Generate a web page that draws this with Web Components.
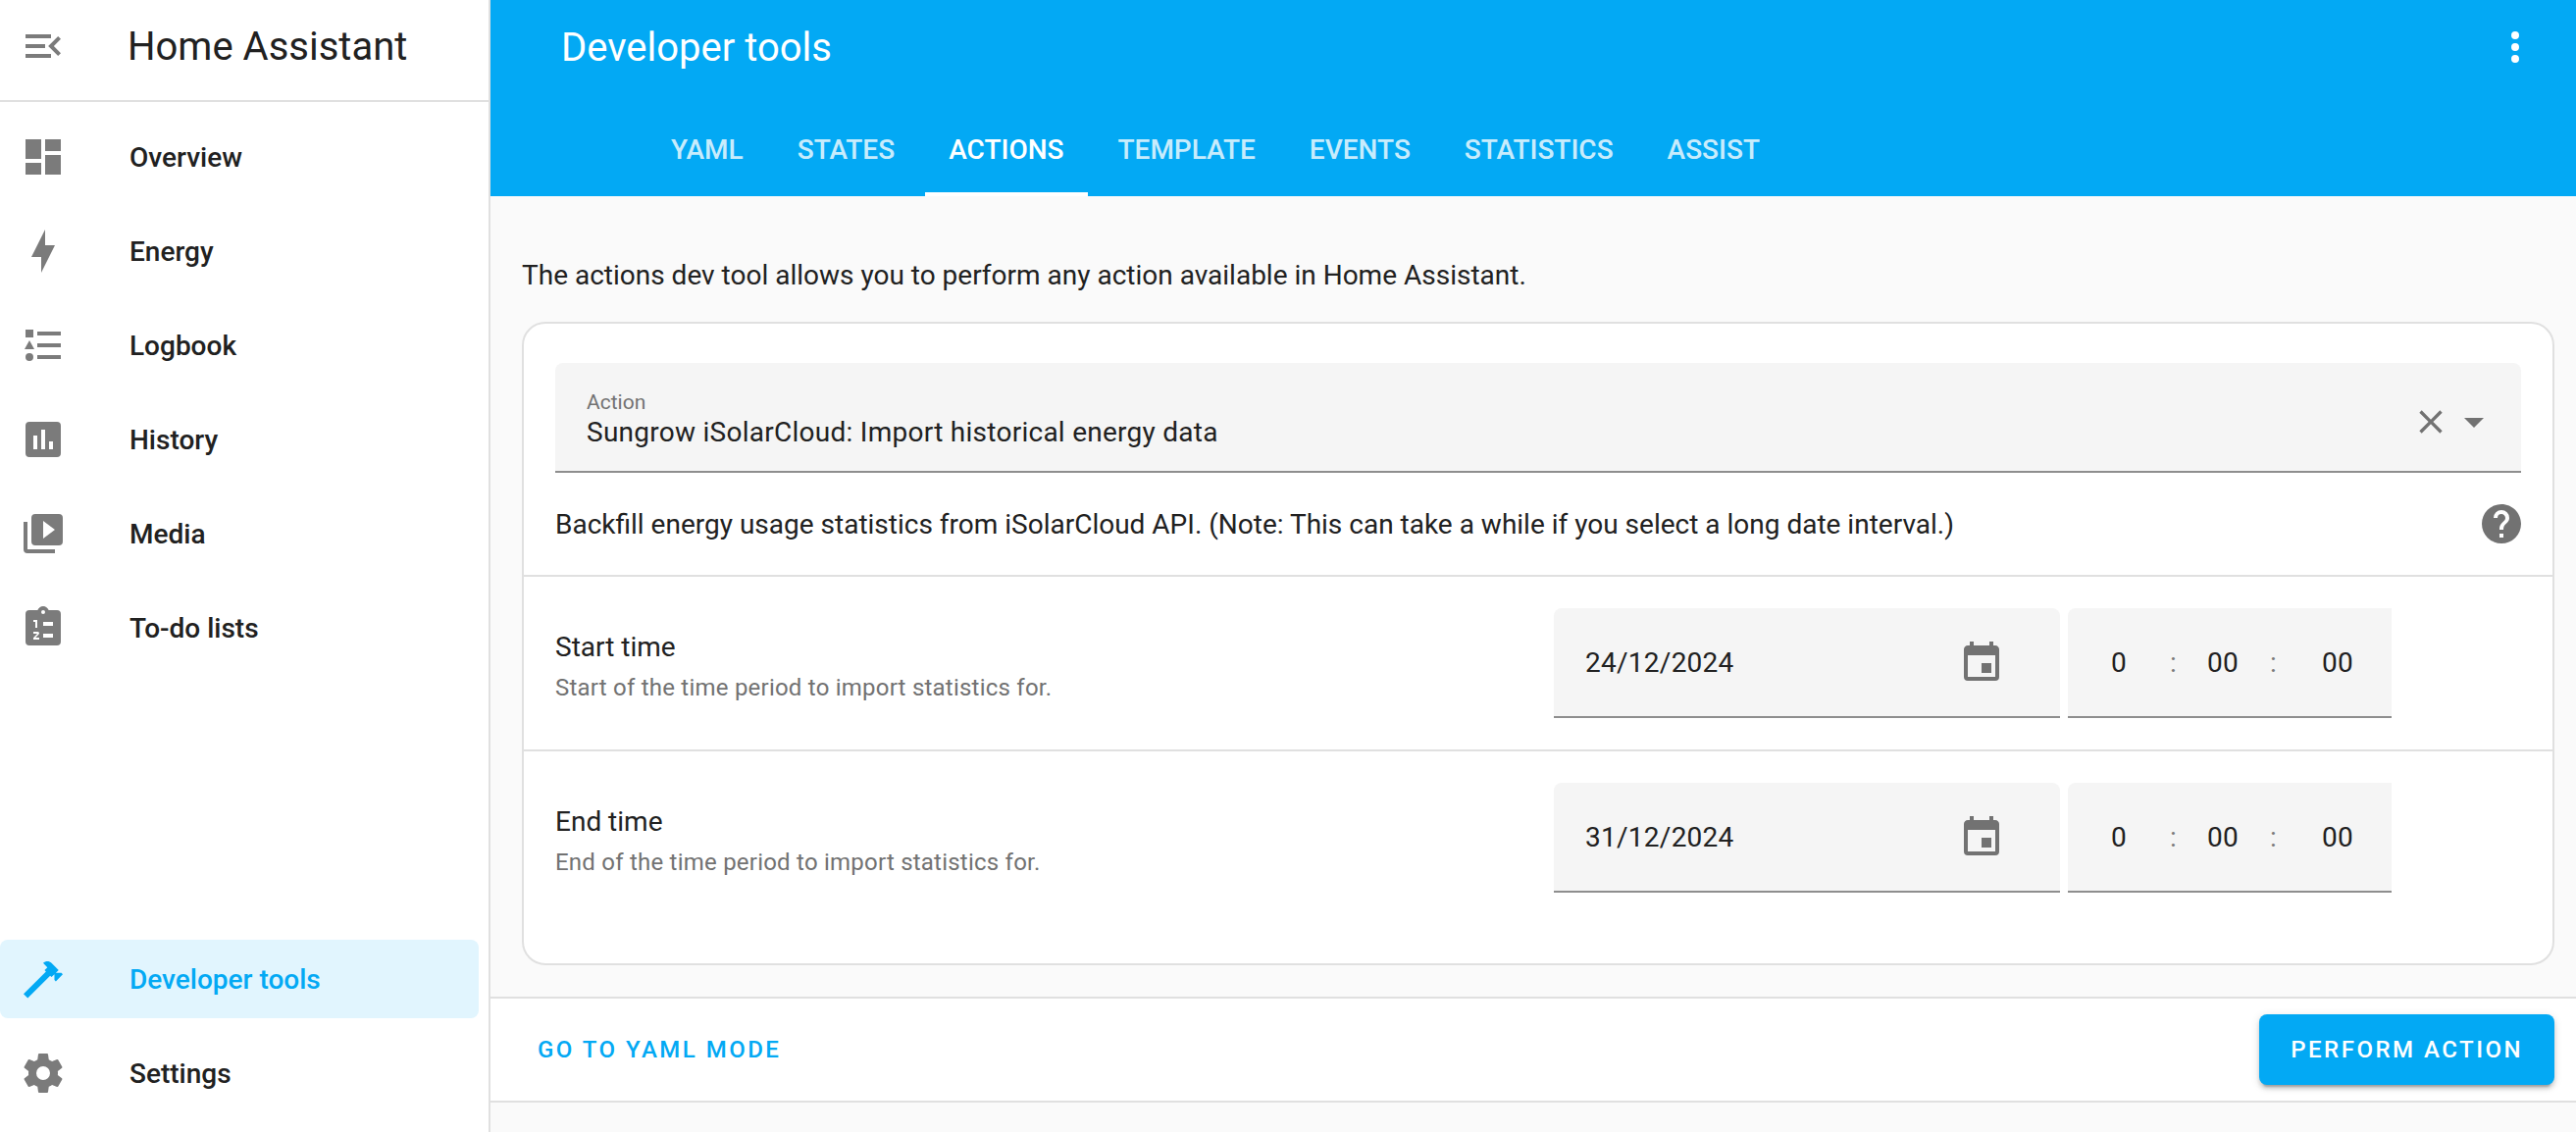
<!DOCTYPE html>
<html lang="en">
<head>
<meta charset="utf-8">
<meta name="viewport" content="width=device-width, initial-scale=1">
<title>Developer tools – Home Assistant</title>
<style>
  :root {
    --primary: #03a9f4;
    --text: #212121;
    --text-secondary: #727272;
    --divider: #e0e0e0;
    --page: #fafafa;
    --field: #f5f5f5;
    --field-line: #8e8e8e;
    --body-spacing: .009375em;
  }
  body {
    margin: 0;
    background: var(--page);
    color: var(--text);
    font: 400 28px/40px Roboto, "Noto Sans", sans-serif;
  }
</style>
</head>
<body>
<ha-app></ha-app>
<script>
  const ICONS = {
    menuOpen: 'M21,15.61L19.59,17L14.58,12L19.59,7L21,8.39L17.44,12L21,15.61M3,6H16V8H3V6M3,13V11H13V13H3M3,18V16H16V18H3Z',
    dashboard: 'M13,3V9H21V3M13,21H21V11H13M3,21H11V15H3M3,13H11V3H3V13Z',
    bolt: 'M11 15H6L13 1V9H18L11 23V15Z',
    logbook: 'M5,9.5L7.5,14H2.5L5,9.5M3,4H7V8H3V4M5,20A2,2 0 0,0 7,18A2,2 0 0,0 5,16A2,2 0 0,0 3,18A2,2 0 0,0 5,20M9,5V7H21V5H9M9,19H21V17H9V19M9,11V13H21V11H9Z',
    chart: 'M19,3H5A2,2 0 0,0 3,5V19A2,2 0 0,0 5,21H19A2,2 0 0,0 21,19V5A2,2 0 0,0 19,3M9,17H7V10H9V17M13,17H11V7H13V17M17,17H15V13H17V17Z',
    media: 'M4,6H2V20A2,2 0 0,0 4,22H18V20H4V6M20,2H8A2,2 0 0,0 6,4V16A2,2 0 0,0 8,18H20A2,2 0 0,0 22,16V4A2,2 0 0,0 20,2M12,14.5V5.5L18,10L12,14.5Z',
    todo: 'M19,3H14.82C14.4,1.84 13.3,1 12,1C10.7,1 9.6,1.84 9.18,3H5A2,2 0 0,0 3,5V19A2,2 0 0,0 5,21H19A2,2 0 0,0 21,19V5A2,2 0 0,0 19,3M12,3A1,1 0 0,1 13,4A1,1 0 0,1 12,5A1,1 0 0,1 11,4A1,1 0 0,1 12,3M7,8H9V12H8V9H7V8M12,9H17V11H12V9M7,14H9.25A0.75,0.75 0 0,1 10,14.75C10,14.95 9.92,15.14 9.79,15.27L8.12,17H10V18H7V17.08L9,15H7V14M12,15H17V17H12V15Z',
    hammer: 'M2,19.63L13.43,8.2L12.72,7.5L14.14,6.07L12,3.89C13.2,2.7 15.09,2.7 16.27,3.89L19.87,7.5L18.45,8.91H21.29L22,9.62L18.45,13.21L17.74,12.5V9.62L16.27,11.04L15.56,10.33L4.13,21.76L2,19.63Z',
    cog: 'M12,15.5A3.5,3.5 0 0,1 8.5,12A3.5,3.5 0 0,1 12,8.5A3.5,3.5 0 0,1 15.5,12A3.5,3.5 0 0,1 12,15.5M19.43,12.97C19.47,12.65 19.5,12.33 19.5,12C19.5,11.67 19.47,11.34 19.43,11L21.54,9.37C21.73,9.22 21.78,8.95 21.66,8.73L19.66,5.27C19.54,5.05 19.27,4.96 19.05,5.05L16.56,6.05C16.04,5.66 15.5,5.32 14.87,5.07L14.5,2.42C14.46,2.18 14.25,2 14,2H10C9.75,2 9.54,2.18 9.5,2.42L9.13,5.07C8.5,5.32 7.96,5.66 7.44,6.05L4.95,5.05C4.73,4.96 4.46,5.05 4.34,5.27L2.34,8.73C2.21,8.95 2.27,9.22 2.46,9.37L4.57,11C4.53,11.34 4.5,11.67 4.5,12C4.5,12.33 4.53,12.65 4.57,12.97L2.46,14.63C2.27,14.78 2.21,15.05 2.34,15.27L4.34,18.73C4.46,18.95 4.73,19.03 4.95,18.95L7.44,17.94C7.96,18.34 8.5,18.68 9.13,18.93L9.5,21.58C9.54,21.82 9.75,22 10,22H14C14.25,22 14.46,21.82 14.5,21.58L14.87,18.93C15.5,18.67 16.04,18.34 16.56,17.94L19.05,18.95C19.27,19.03 19.54,18.95 19.66,18.73L21.66,15.27C21.78,15.05 21.73,14.78 21.54,14.63L19.43,12.97Z',
    dots: 'M12,16A2,2 0 0,1 14,18A2,2 0 0,1 12,20A2,2 0 0,1 10,18A2,2 0 0,1 12,16M12,10A2,2 0 0,1 14,12A2,2 0 0,1 12,14A2,2 0 0,1 10,12A2,2 0 0,1 12,10M12,4A2,2 0 0,1 14,6A2,2 0 0,1 12,8A2,2 0 0,1 10,6A2,2 0 0,1 12,4Z',
    close: 'M19,6.41L17.59,5L12,10.59L6.41,5L5,6.41L10.59,12L5,17.59L6.41,19L12,13.41L17.59,19L19,17.59L13.41,12L19,6.41Z',
    down: 'M7,10L12,15L17,10H7Z',
    help: 'M15.07,11.25L14.17,12.17C13.45,12.89 13,13.5 13,15H11V14.5C11,13.39 11.45,12.39 12.17,11.67L13.41,10.41C13.78,10.05 14,9.55 14,9C14,7.89 13.1,7 12,7A2,2 0 0,0 10,9H8A4,4 0 0,1 12,5A4,4 0 0,1 16,9C16,9.88 15.64,10.67 15.07,11.25M13,19H11V17H13M12,2A10,10 0 0,0 2,12A10,10 0 0,0 12,22A10,10 0 0,0 22,12C22,6.47 17.5,2 12,2Z',
    calendar: 'M19,19H5V8H19M16,1V3H8V1H6V3H5C3.89,3 3,3.89 3,5V19A2,2 0 0,0 5,21H19A2,2 0 0,0 21,19V5C21,3.89 20.1,3 19,3H18V1M17,12H12V17H17V12Z'
  };

  const RESET = `
    *, *::before, *::after { box-sizing: border-box; }
    button, input { font: inherit; color: inherit; background: none; border: 0; padding: 0; margin: 0; outline: 0; border-radius: 0; }
    button { display: flex; align-items: center; cursor: pointer; }
    a { color: inherit; text-decoration: none; }
    h1, p { margin: 0; font: inherit; }
  `;

  class ShadowElement extends HTMLElement {
    connectedCallback() {
      if (this.shadowRoot) return;
      const t = document.createElement('template');
      t.innerHTML = `<style>${RESET}</style>` + this.render();
      this.attachShadow({ mode: 'open' }).append(t.content.cloneNode(true));
    }
    attr(name) { return this.getAttribute(name) || ''; }
  }

  class HaIcon extends ShadowElement {
    render() {
      return `<style>
        :host { display: block; flex: none; width: 48px; height: 48px; }
        svg { display: block; width: 100%; height: 100%; fill: currentColor; }
      </style>
      <svg viewBox="${this.attr('box') || '0 0 24 24'}" aria-hidden="true"><path fill-rule="evenodd" d="${ICONS[this.attr('name')]}"/></svg>`;
    }
  }

  class HaSidebarItem extends ShadowElement {
    render() {
      return `<style>
        :host { display: block; margin-right: 10px; }
        a { display: flex; align-items: center; gap: 64px; height: 80px; padding: 0 20px; border-radius: 8px; font-weight: 500; }
        span { padding-top: 2px; }
        ha-icon { color: #7b7b7b; }
        :host([selected]) a { background: #e1f5fe; color: var(--primary); }
        :host([selected]) ha-icon { color: inherit; }
      </style>
      <a href="#"><ha-icon name="${this.attr('icon')}"></ha-icon><span><slot></slot></span></a>`;
    }
  }

  class HaSidebar extends ShadowElement {
    render() {
      return `<style>
        :host { display: flex; flex-direction: column; background: #fff; border-right: 2px solid var(--divider); }
        header { display: flex; align-items: center; gap: 62px; height: 104px; padding: 0 20px 8px; border-bottom: 2px solid var(--divider); }
        button { color: #7b7b7b; }
        h1 { padding-top: 2px; font-size: 40px; }
        nav { flex: 1; display: flex; flex-direction: column; gap: 16px; padding: 16px 0 20px; }
        .spacer { flex: 1; }
      </style>
      <header>
        <button type="button" aria-label="Sidebar toggle"><ha-icon name="menuOpen"></ha-icon></button>
        <h1>Home Assistant</h1>
      </header>
      <nav>
        <ha-sidebar-item icon="dashboard">Overview</ha-sidebar-item>
        <ha-sidebar-item icon="bolt">Energy</ha-sidebar-item>
        <ha-sidebar-item icon="logbook">Logbook</ha-sidebar-item>
        <ha-sidebar-item icon="chart">History</ha-sidebar-item>
        <ha-sidebar-item icon="media">Media</ha-sidebar-item>
        <ha-sidebar-item icon="todo">To-do lists</ha-sidebar-item>
        <div class="spacer"></div>
        <ha-sidebar-item icon="hammer" selected>Developer tools</ha-sidebar-item>
        <ha-sidebar-item icon="cog">Settings</ha-sidebar-item>
      </nav>`;
    }
  }

  class HaTab extends ShadowElement {
    render() {
      return `<style>
        :host { display: flex; }
        button { padding: 2px 24px 0; font-weight: 500; text-transform: uppercase; color: rgba(255, 255, 255, .8); border: solid transparent; border-width: 4px 0; }
        :host([active]) button { color: #fff; border-bottom-color: #fff; }
      </style>
      <button type="button" role="tab" aria-selected="${this.hasAttribute('active')}"><slot></slot></button>`;
    }
  }

  class HaHeader extends ShadowElement {
    render() {
      return `<style>
        :host { display: block; background: var(--primary); color: #fff; }
        .bar { display: flex; align-items: center; justify-content: space-between; height: 104px; padding: 0 38px 8px 72px; }
        h1 { padding-top: 2px; font-size: 40px; }
        .tabs { display: flex; gap: 7px; height: 96px; padding-left: 160px; }
      </style>
      <div class="bar">
        <h1>Developer tools</h1>
        <button type="button" aria-label="Menu"><ha-icon name="dots"></ha-icon></button>
      </div>
      <div class="tabs" role="tablist">
        <ha-tab>YAML</ha-tab>
        <ha-tab>States</ha-tab>
        <ha-tab active>Actions</ha-tab>
        <ha-tab>Template</ha-tab>
        <ha-tab>Events</ha-tab>
        <ha-tab>Statistics</ha-tab>
        <ha-tab>Assist</ha-tab>
      </div>`;
    }
  }

  class HaActionPicker extends ShadowElement {
    render() {
      return `<style>
        :host { display: flex; align-items: center; height: 112px; padding: 10px 24px 0 32px; background: var(--field); border-bottom: 2px solid var(--field-line); border-radius: 8px 8px 0 0; color: var(--text); }
        .text { flex: 1; display: flex; flex-direction: column; }
        label { font-size: 21px; line-height: 22px; color: var(--text-secondary); }
        input { width: 100%; height: 40px; letter-spacing: var(--body-spacing); }
        button { color: var(--text-secondary); }
        .clear ha-icon { width: 40px; height: 40px; }
      </style>
      <div class="text">
        <label for="action">Action</label>
        <input id="action" type="text" role="combobox" aria-expanded="false" value="${this.attr('value')}">
      </div>
      <button class="clear" type="button" aria-label="Clear"><ha-icon name="close"></ha-icon></button>
      <button type="button" aria-label="Toggle"><ha-icon name="down"></ha-icon></button>`;
    }
  }

  class HaDateInput extends ShadowElement {
    render() {
      return `<style>
        :host { display: flex; align-items: center; height: 112px; padding: 2px 56px 0 32px; background: var(--field); border-bottom: 2px solid var(--field-line); border-radius: 8px 8px 0 0; }
        input { flex: 1; min-width: 0; height: 40px; letter-spacing: var(--body-spacing); }
        button { color: var(--text-secondary); }
      </style>
      <input type="text" aria-label="${this.attr('label')} date" value="${this.attr('value')}">
      <button type="button" aria-label="Open calendar"><ha-icon name="calendar"></ha-icon></button>`;
    }
  }

  class HaTimeInput extends ShadowElement {
    render() {
      const [h, m, s] = this.attr('value').split(':');
      const label = this.attr('label');
      return `<style>
        :host { display: grid; grid-template-columns: 104px 6px 96px 6px 118px; align-items: center; height: 112px; padding-top: 2px; background: var(--field); border-bottom: 2px solid var(--field-line); border-radius: 8px 0 0 0; }
        input { width: 100%; height: 40px; text-align: center; letter-spacing: var(--body-spacing); }
        span { text-align: center; color: #7b7b7b; }
        input:last-child { padding-left: 8px; }
      </style>
      <input type="text" inputmode="numeric" aria-label="${label} hours" value="${h}"><span>:</span>
      <input type="text" inputmode="numeric" aria-label="${label} minutes" value="${m}"><span>:</span>
      <input type="text" inputmode="numeric" aria-label="${label} seconds" value="${s}">`;
    }
  }

  class HaSettingsRow extends ShadowElement {
    render() {
      return `<style>
        :host { display: grid; grid-template-columns: 1018fr 986fr; align-items: center; padding: 32px; border-top: 2px solid var(--divider); }
        .text { padding-top: 10px; }
        .sub { font-size: 24px; line-height: 42px; letter-spacing: var(--body-spacing); color: var(--text-secondary); }
        .content { display: flex; gap: 8px; padding-right: 132px; }
        ha-date-input { flex: 1; }
      </style>
      <div class="text"><p><slot></slot></p><p class="sub"><slot name="description"></slot></p></div>
      <div class="content">
        <ha-date-input label="${this.attr('label')}" value="${this.attr('date')}"></ha-date-input>
        <ha-time-input label="${this.attr('label')}" value="${this.attr('time')}"></ha-time-input>
      </div>`;
    }
  }

  class HaActionCard extends ShadowElement {
    render() {
      return `<style>
        :host { display: block; padding: 40px 0; background: #fff; border: 2px solid var(--divider); border-radius: 24px; }
        ha-action-picker { margin: 0 32px; }
        .description { display: flex; align-items: center; justify-content: space-between; height: 104px; padding: 0 32px; }
        .description p { padding-top: 2px; }
        .description ha-icon { width: 40px; height: 40px; color: var(--text-secondary); }
      </style>
      <ha-action-picker value="Sungrow iSolarCloud: Import historical energy data"></ha-action-picker>
      <div class="description">
        <p>Backfill energy usage statistics from iSolarCloud API. (Note: This can take a while if you select a long date interval.)</p>
        <a href="#" aria-label="Help"><ha-icon name="help" box="2 2 20 20"></ha-icon></a>
      </div>
      <ha-settings-row label="Start time" date="24/12/2024" time="0:00:00">Start time<span slot="description">Start of the time period to import statistics for.</span></ha-settings-row>
      <ha-settings-row label="End time" date="31/12/2024" time="0:00:00">End time<span slot="description">End of the time period to import statistics for.</span></ha-settings-row>`;
    }
  }

  class HaButton extends ShadowElement {
    render() {
      return `<style>
        :host { display: block; }
        button { height: 72px; padding: 0 16px; border-radius: 8px; font-size: 24px; font-weight: 500; letter-spacing: .104em; text-transform: uppercase; color: var(--primary); }
        :host([raised]) button { padding: 0 32px; background: var(--primary); color: #fff; box-shadow: 0 6px 2px -4px rgba(0,0,0,.2), 0 4px 4px 0 rgba(0,0,0,.14), 0 2px 10px 0 rgba(0,0,0,.12); }
      </style>
      <button type="button"><slot></slot></button>`;
    }
  }

  class HaActionBar extends ShadowElement {
    render() {
      return `<style>
        :host { display: flex; align-items: center; justify-content: space-between; padding: 16px 22px 16px 32px; background: #fff; border: solid var(--divider); border-width: 2px 0; }
      </style>
      <ha-button>Go to YAML mode</ha-button>
      <ha-button raised>Perform action</ha-button>`;
    }
  }

  class HaApp extends ShadowElement {
    render() {
      return `<style>
        :host { display: grid; grid-template-columns: 500px minmax(0, 1fr); min-height: 100vh; }
        .content { padding: 61px 22px 32px 32px; }
        .intro { margin-bottom: 27px; }
      </style>
      <ha-sidebar></ha-sidebar>
      <main>
        <ha-header></ha-header>
        <div class="content">
          <p class="intro">The actions dev tool allows you to perform any action available in Home Assistant.</p>
          <ha-action-card></ha-action-card>
        </div>
        <ha-action-bar></ha-action-bar>
      </main>`;
    }
  }

  customElements.define('ha-icon', HaIcon);
  customElements.define('ha-sidebar-item', HaSidebarItem);
  customElements.define('ha-sidebar', HaSidebar);
  customElements.define('ha-tab', HaTab);
  customElements.define('ha-header', HaHeader);
  customElements.define('ha-action-picker', HaActionPicker);
  customElements.define('ha-date-input', HaDateInput);
  customElements.define('ha-time-input', HaTimeInput);
  customElements.define('ha-settings-row', HaSettingsRow);
  customElements.define('ha-action-card', HaActionCard);
  customElements.define('ha-button', HaButton);
  customElements.define('ha-action-bar', HaActionBar);
  customElements.define('ha-app', HaApp);
</script>
</body>
</html>
